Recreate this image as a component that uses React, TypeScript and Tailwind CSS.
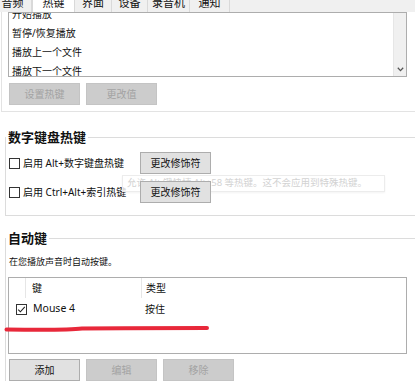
import React from "react";

const font = { fontFamily: '"Noto Sans", "Noto Sans CJK SC", sans-serif' };

const tabs = [
  { label: "音频", w: "w-[38px]", extra: "-ml-[6px]" },
  { label: "热键", w: "w-[43px]", active: true },
  { label: "界面", w: "w-[37px]" },
  { label: "设备", w: "w-[36px]" },
  { label: "录音机", w: "w-[42px]" },
  { label: "通知", w: "w-[40px]" },
];

const hotkeys = ["开始播放", "暂停/恢复播放", "播放上一个文件", "播放下一个文件"];

function Btn({ children, disabled, className = "" }: { children: React.ReactNode; disabled?: boolean; className?: string }) {
  return (
    <div
      className={`flex h-[22px] w-[71px] items-center justify-center border text-[10px] ${
        disabled ? "border-[#c4c4c4] bg-[#cccccc] text-[#a3a3a3]" : "border-[#adadad] bg-[#e1e1e1] text-[#111]"
      } ${className}`}
    >
      {children}
    </div>
  );
}

function Check({ checked }: { checked?: boolean }) {
  return (
    <div className="flex h-[11px] w-[11px] shrink-0 items-center justify-center border border-[#333] bg-white">
      {checked && (
        <svg width="9" height="9" viewBox="0 0 9 9">
          <path d="M1.2 4.6 L3.4 6.8 L7.8 1.8" fill="none" stroke="#222" strokeWidth="1.1" />
        </svg>
      )}
    </div>
  );
}

function GroupHeader({ title }: { title: string }) {
  return (
    <div className="-mt-[7px] flex h-[14px] items-center">
      <span className="bg-white pl-[2px] pr-[2px] text-[13px] font-bold leading-[14px] text-[#111]">{title}</span>
      <div className="h-px flex-1 bg-[#dcdcdc]" />
    </div>
  );
}

export default function App() {
  return (
    <div className="h-[381px] w-[415px] overflow-hidden bg-white text-[10px] text-[#111]" style={font}>
      {/* tab strip */}
      <div className="flex h-[12px] overflow-hidden bg-[#f0f0f0]">
        {tabs.map((t) => (
          <div
            key={t.label}
            className={`${t.w} ${t.extra ?? ""} flex shrink-0 justify-center border-r border-[#d9d9d9] ${
              t.active ? "border-l bg-white" : ""
            }`}
          >
            <span className="-mt-[4px] text-[11px] leading-[14px]">{t.label}</span>
          </div>
        ))}
      </div>

      {/* hotkey list section */}
      <div className="ml-[1px] border-b border-l border-[#e3e3e3] pb-[6px]">
        <div className="ml-[6px] flex h-[65px] w-[399px] overflow-hidden border border-[#adadad] bg-white">
          <div className="flex-1 overflow-hidden">
            <div className="-mt-[8px] pl-[3px]">
              {hotkeys.map((h) => (
                <div key={h} className="flex h-[19px] items-center leading-[19px]">
                  {h}
                </div>
              ))}
            </div>
          </div>
          <div className="flex w-[13px] flex-col items-center justify-end border-l border-[#e6e6e6] bg-[#f0f0f0] pb-[4px]">
            <svg width="7" height="5" viewBox="0 0 7 5">
              <path d="M0.8 0.8 L3.5 3.6 L6.2 0.8" fill="none" stroke="#555" strokeWidth="1.3" />
            </svg>
          </div>
        </div>
        <div className="ml-[7px] mt-[6px] flex gap-[6px]">
          <Btn disabled>设置热键</Btn>
          <Btn disabled>更改值</Btn>
        </div>
      </div>

      {/* numpad hotkeys */}
      <div className="relative ml-[5px] mt-[25px] flow-root border-b border-l border-[#dcdcdc] pb-[12px]">
        <GroupHeader title="数字键盘热键" />
        <div className="mt-[8px] flex h-[22px] items-center pl-[3px]">
          <div className="flex w-[131px] items-center gap-[3px]">
            <Check />
            <span>启用 Alt+数字键盘热键</span>
          </div>
          <Btn className="w-[70px]">更改修饰符</Btn>
        </div>
        <div className="mt-[7px] flex h-[22px] items-center pl-[3px]">
          <div className="flex w-[131px] items-center gap-[3px]">
            <Check />
            <span>启用 Ctrl+Alt+索引热键</span>
          </div>
          <Btn className="relative z-10 w-[70px]">更改修饰符</Btn>
        </div>
        {/* fading tooltip */}
        <div className="absolute left-[116px] top-[38px] flex h-[17px] w-[263px] items-center border border-[#ececec] bg-white/80 pl-[4px] text-[9.5px] text-[#d2d2d2] shadow-[0_1px_2px_rgba(0,0,0,0.05)]">
          允许 Alt 键快捷 Alt+58 等热键。这不会应用到特殊热键。
        </div>
      </div>

      {/* auto keys */}
      <div className="relative ml-[5px] mt-[22px] flow-root border-l border-[#dcdcdc] pb-[40px]">
        <GroupHeader title="自动键" />
        <div className="mt-[10px] pl-[3px] text-[9px] leading-[14px]">在您播放声音时自动按键。</div>
        <div className="ml-[2px] mt-[8px] h-[77px] w-[399px] border border-[#adadad] bg-white">
          <div className="flex h-[20px] items-center">
            <div className="h-full w-[17px] border-r border-[#e6e6e6]" />
            <div className="flex h-full w-[116px] items-center border-r border-[#e6e6e6] pl-[6px]">键</div>
            <div className="pl-[4px]">类型</div>
          </div>
          <div className="flex h-[22px] items-center">
            <div className="flex w-[22px] justify-center pl-[3px]">
              <Check checked />
            </div>
            <div className="w-[113px] pl-[2px] text-[10.5px]">Mouse 4</div>
            <div className="pl-[1px]">按住</div>
          </div>
        </div>
        <div className="ml-[3px] mt-[5px] flex gap-[6px]">
          <Btn>添加</Btn>
          <Btn disabled>编辑</Btn>
          <Btn disabled>移除</Btn>
        </div>
        {/* red annotation stroke */}
        <svg className="absolute left-[-2px] top-[86px]" width="206" height="9" viewBox="0 0 206 9">
          <path d="M2.5 5.5 C 40 6, 70 5.5, 78 4.5 C 120 4, 170 4.2, 203 4" fill="none" stroke="#e8283a" strokeWidth="4" strokeLinecap="round" />
        </svg>
      </div>
    </div>
  );
}
